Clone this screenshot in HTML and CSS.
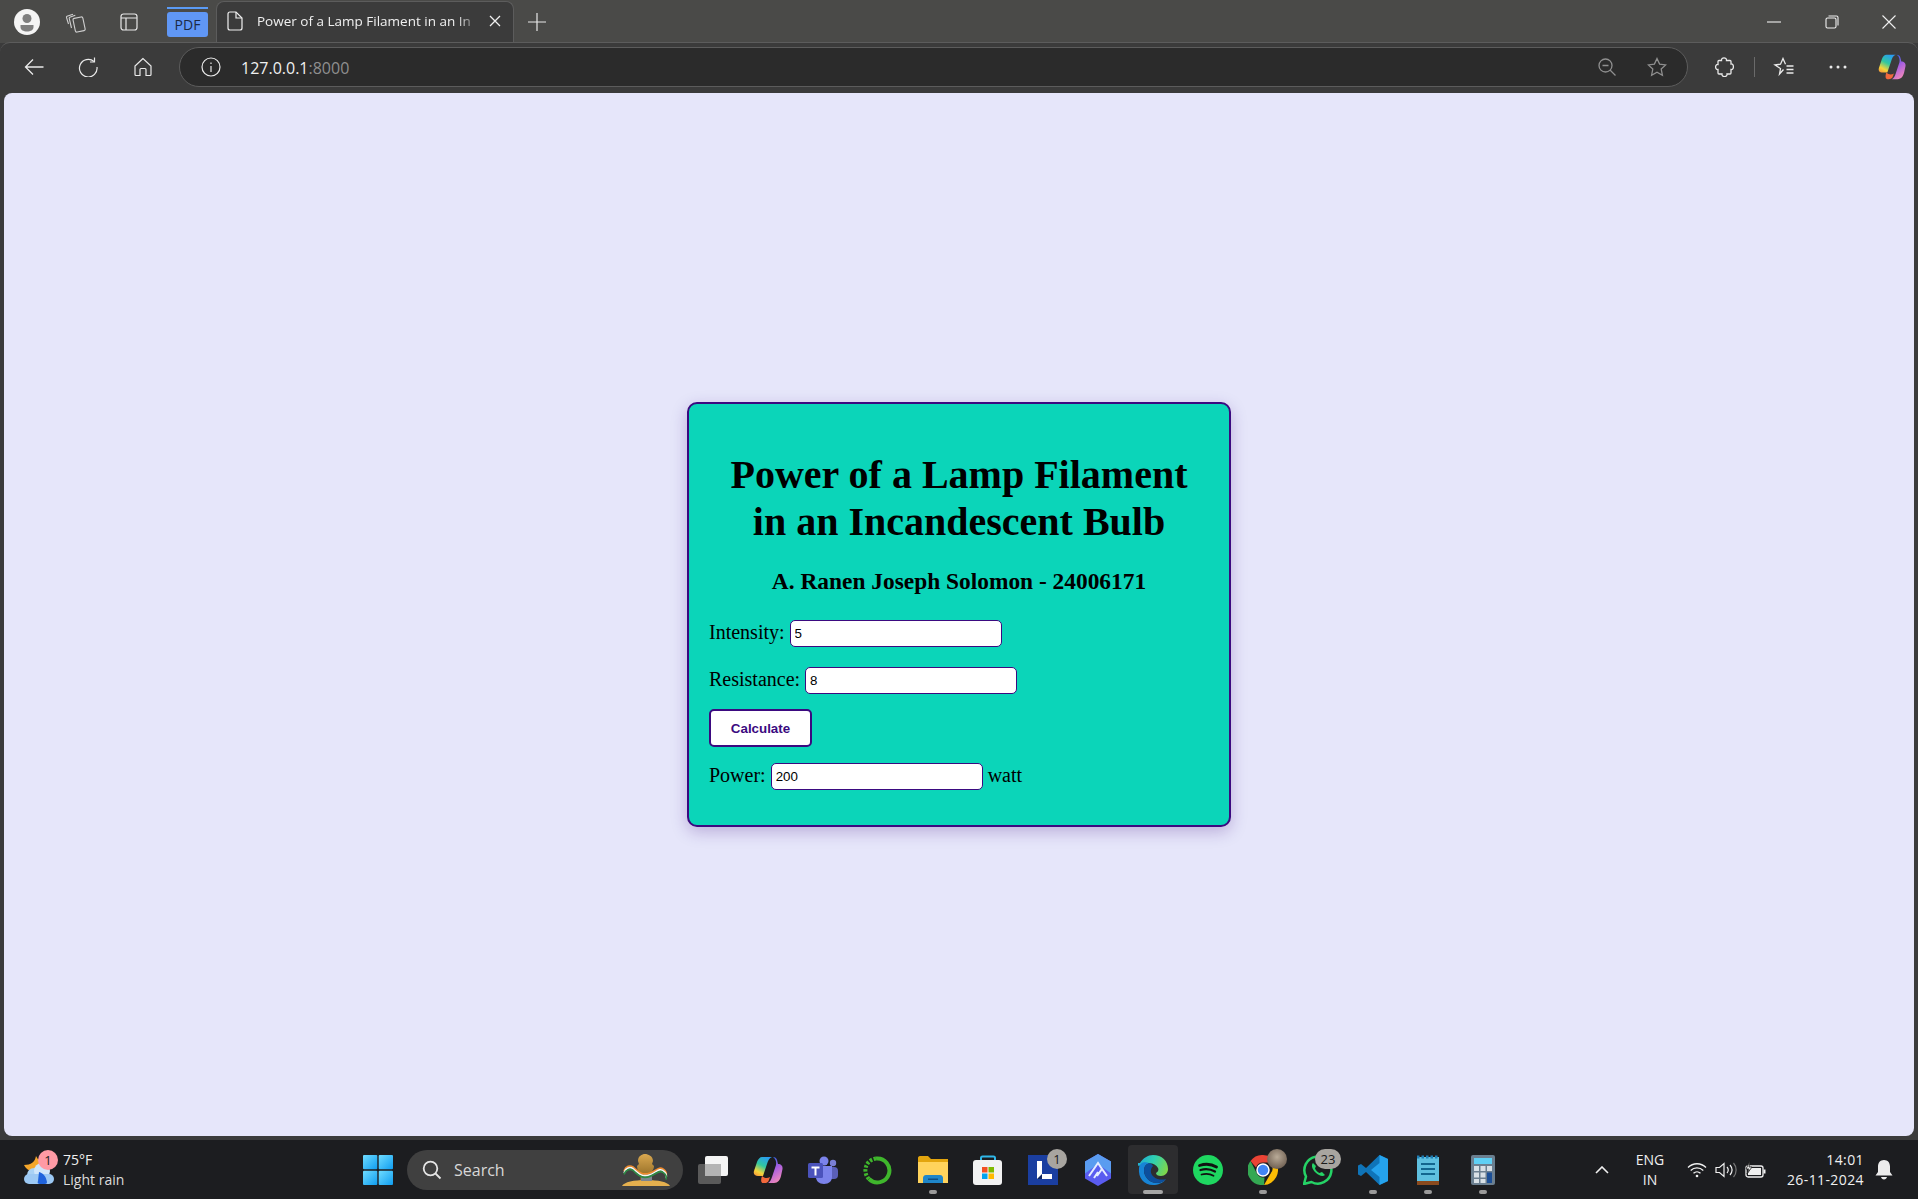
FILE: index.html
```html
<!DOCTYPE html>
<html>

<head>
	<meta charset="utf-8">
	<title>Power of a Lamp Filament in an Incandescent Bulb</title>
	<link rel="stylesheet" href="styles.css">
</head>

<body>
	<svg class="defs" width="0" height="0">
		<defs>
			<linearGradient id="cop-a" x1=".7" y1="0" x2=".2" y2="1">
				<stop offset="0" stop-color="#2a9cf2" />
				<stop offset=".45" stop-color="#30c8a0" />
				<stop offset=".8" stop-color="#f5d53a" />
				<stop offset="1" stop-color="#f5a03a" />
			</linearGradient>
			<linearGradient id="cop-b" x1=".3" y1="0" x2=".7" y2="1">
				<stop offset="0" stop-color="#2b63e8" />
				<stop offset=".45" stop-color="#a85fe0" />
				<stop offset="1" stop-color="#f58bb8" />
			</linearGradient>
			<linearGradient id="win-g" x1="0" y1="0" x2="1" y2="1">
				<stop offset="0" stop-color="#6fdcff" />
				<stop offset="1" stop-color="#0f9df0" />
			</linearGradient>
			<linearGradient id="edge-g" x1="0" y1=".3" x2="1" y2=".6">
				<stop offset="0" stop-color="#1fa8d8" />
				<stop offset=".5" stop-color="#2fd0b0" />
				<stop offset="1" stop-color="#7fd64a" />
			</linearGradient>
			<linearGradient id="gold-g" x1="0" y1="0" x2="0" y2="1">
				<stop offset="0" stop-color="#d9a850" />
				<stop offset="1" stop-color="#8a6420" />
			</linearGradient>
			<symbol id="copilot" viewBox="0 0 30 30">
				<path d="M9 2h10c-3 1-4 4-5 7l-4 12H5c-3 0-5-2-4-5l3-9C5 4 7 2 9 2z" fill="url(#cop-a)" />
				<path d="M20 2c2 0 3.500 1 4 3l1 4c3 0 5 2 4.500 5l-1.500 7c-1 4-3 7-7 7h-6c2-1 3-3 4-6l4-12c.5-3 0-6-3-8z" fill="url(#cop-b)" />
				<path d="M9 21c2 2 5 3 8 1l-1 3c-.8 2.500-2.500 3-4.500 3H10c-2 0-2.500-3-1-7z" fill="#f2683c" />
			</symbol>
		</defs>
	</svg>

	<div class="browser">
		<div class="titlebar">
			<div class="avatar">
				<svg width="26" height="26" viewBox="0 0 26 26">
					<circle cx="13" cy="13" r="13" fill="#f4f4f4" />
					<circle cx="13" cy="9.500" r="4.500" fill="#7e7e7e" />
					<path d="M6.500 16h13v2c0 3-3 4.500-6.500 4.500S6.500 21 6.500 18z" fill="#7e7e7e" />
				</svg>
			</div>
			<div class="tb-btn">
				<svg width="22" height="22" viewBox="0 0 22 22" fill="none" stroke="#cfcfcf" stroke-width="1.100">
					<path d="M3.500 13 1.500 6.500c-.2-.6 0-1 .5-1.200L8 3.200" />
					<path d="M6.500 17 4.200 7.500c-.1-.6 .1-1 .6-1.200l5.500-2" />
					<rect x="9" y="6.500" width="10" height="14" rx="1.500" transform="rotate(-12 14 13)" />
				</svg>
			</div>
			<div class="tb-btn">
				<svg width="18" height="18" viewBox="0 0 18 18" fill="none" stroke="#e8e8e8" stroke-width="1.200">
					<rect x="1" y="1" width="16" height="16" rx="2.500" />
					<path d="M1 5h16M6 5v12" />
				</svg>
			</div>
			<div class="pdf-tab">
				<span class="pdf-line"></span>
				<span class="pdf-box">PDF</span>
			</div>
			<div class="tab">
				<svg width="16" height="20" viewBox="0 0 16 20" fill="none" stroke="#f0f0f0" stroke-width="1.200">
					<path d="M3 1h6l6 6v10c0 1.100-.9 2-2 2H3c-1.100 0-2-.9-2-2V3c0-1.100 .9-2 2-2z" />
					<path d="M9 1v6h6" />
				</svg>
				<span class="tab-title">Power of a Lamp Filament in an In</span>
				<svg width="12" height="12" viewBox="0 0 12 12" stroke="#f0f0f0" stroke-width="1.300">
					<path d="M1 1l10 10M11 1 1 11" />
				</svg>
			</div>
			<div class="new-tab">
				<svg width="18" height="18" viewBox="0 0 18 18" stroke="#e8e8e8" stroke-width="1.200">
					<path d="M9 0v18M0 9h18" />
				</svg>
			</div>
			<div class="win-controls">
				<div class="win-btn">
					<svg width="14" height="14" viewBox="0 0 14 14" stroke="#f0f0f0" stroke-width="1.100">
						<path d="M0 7h14" />
					</svg>
				</div>
				<div class="win-btn">
					<svg width="14" height="14" viewBox="0 0 14 14" fill="none" stroke="#f0f0f0" stroke-width="1.100">
						<rect x="1" y="3" width="10" height="10" rx="1.500" />
						<path d="M3.500 1h8c.9 0 1.500 .6 1.500 1.500v8" />
					</svg>
				</div>
				<div class="win-btn">
					<svg width="14" height="14" viewBox="0 0 14 14" stroke="#f0f0f0" stroke-width="1.100">
						<path d="M.5 .5l13 13M13.500 .5l-13 13" />
					</svg>
				</div>
			</div>
		</div>

		<div class="toolbar">
			<div class="tool-btn">
				<svg width="20" height="18" viewBox="0 0 20 18" fill="none" stroke="#eaeaea" stroke-width="1.300">
					<path d="M19.500 9H1.500M9 1.500 1.500 9 9 16.500" />
				</svg>
			</div>
			<div class="tool-btn">
				<svg width="20" height="20" viewBox="0 0 20 20" fill="none" stroke="#eaeaea" stroke-width="1.200">
					<path d="M16 4.500A8.800 8.800 0 1 0 19 10" />
					<path d="M16.500 .5v4.500H12" />
				</svg>
			</div>
			<div class="tool-btn home">
				<svg width="20" height="20" viewBox="0 0 20 20" fill="none" stroke="#eaeaea" stroke-width="1.200">
					<path d="M10 1.500 2 9v8.500c0 .6 .4 1 1 1h4v-6c0-.6 .4-1 1-1h4c.6 0 1 .4 1 1v6h4c.6 0 1-.4 1-1V9z" />
				</svg>
			</div>
			<div class="address">
				<svg width="20" height="20" viewBox="0 0 20 20" fill="none" stroke="#eaeaea" stroke-width="1.200">
					<circle cx="10" cy="10" r="9" />
					<path d="M10 9v6M10 5.500v1.500" />
				</svg>
				<span class="url">127.0.0.1<span class="url-port">:8000</span></span>
				<svg class="addr-zoom" width="18" height="18" viewBox="0 0 18 18" fill="none" stroke="#8f8f8f" stroke-width="1.300">
					<circle cx="7.500" cy="7.500" r="6.500" />
					<path d="M4.500 7.500h6M12 12l5.500 5.500" />
				</svg>
				<svg class="addr-star" width="20" height="20" viewBox="0 0 20 20" fill="none" stroke="#8f8f8f" stroke-width="1.300">
					<path d="M10 1.500l2.600 5.600 6.100 .8-4.500 4.200 1.200 6.100-5.400-3-5.400 3 1.200-6.100L1.300 7.900l6.100-.8z" />
				</svg>
			</div>
			<div class="tool-btn puzzle">
				<svg width="20" height="20" viewBox="0 0 20 20" fill="none" stroke="#eaeaea" stroke-width="1.300">
					<path d="M7.500 3.500c-.5-3.400 5.500-3.400 5 0h3.500c.6 0 1 .4 1 1V7c3.200-.5 3.200 6 0 5.500V16c0 .6-.4 1-1 1h-3c.5 3.400-5.500 3.400-5 0H5c-.6 0-1-.4-1-1v-3.500C.8 13 .8 7 4 7.500V4.500c0-.6 .4-1 1-1z" />
				</svg>
			</div>
			<span class="tool-sep"></span>
			<div class="tool-btn">
				<svg width="22" height="20" viewBox="0 0 22 20" fill="none" stroke="#eaeaea" stroke-width="1.300">
					<path d="M10.500 12.500 6.500 17l1-5.500L2 8l5.500-.8L10 1.500l2.500 5.700" />
					<path d="M13.500 9h7M13.500 12.500h7M13.500 16h7" />
				</svg>
			</div>
			<div class="tool-btn">
				<svg width="18" height="4" viewBox="0 0 18 4" fill="#eaeaea">
					<circle cx="2" cy="2" r="1.500" />
					<circle cx="9" cy="2" r="1.500" />
					<circle cx="16" cy="2" r="1.500" />
				</svg>
			</div>
			<div class="tool-btn">
				<svg width="28" height="28">
					<use href="#copilot" />
				</svg>
			</div>
		</div>

		<main class="viewport">
			<div class="container">
				<h1 class="title">Power of a Lamp Filament in an Incandescent Bulb</h1>
				<h3 class="author">A. Ranen Joseph Solomon - 24006171</h3>
				<form class="calc-form">
					<div class="form-row">
						<label>Intensity:</label>
						<input class="field" type="text" value="5">
					</div>
					<div class="form-row">
						<label>Resistance:</label>
						<input class="field" type="text" value="8">
					</div>
					<div class="form-row btn-row">
						<button class="calc-btn" type="button">Calculate</button>
					</div>
					<div class="form-row">
						<label>Power:</label>
						<input class="field" type="text" value="200" readonly>
						<span class="unit">watt</span>
					</div>
				</form>
			</div>
		</main>
	</div>

	<div class="taskbar">
		<div class="weather">
			<div class="weather-icon">
				<svg width="32" height="32" viewBox="0 0 32 32">
					<path d="M13 2c-1 6-5 9-12 9 2 4 6 7 12 6 5-1 8-5 7-9-2 0-5-2-7-6z" fill="#f4a62a" />
					<circle cx="11" cy="21" r="7" fill="#a9d2f5" />
					<circle cx="19" cy="17" r="8" fill="#cfe6fb" />
					<rect x="1" y="20" width="30" height="10" rx="5" fill="#9cc9f4" />
					<path d="M16 18c4 1 7 4 8 10 0 1-.5 2-2 2h-5c-2 0-3-1-2-3z" fill="#1f63dc" />
				</svg>
				<span class="weather-badge">1</span>
			</div>
			<div class="weather-text">
				<span>75°F</span>
				<span class="weather-desc">Light rain</span>
			</div>
		</div>

		<div class="task-icons">
			<div class="task-icon">
				<svg width="30" height="30" viewBox="0 0 30 30" fill="url(#win-g)">
					<rect x="0" y="0" width="14.300" height="14.300" rx="1" />
					<rect x="15.700" y="0" width="14.300" height="14.300" rx="1" />
					<rect x="0" y="15.700" width="14.300" height="14.300" rx="1" />
					<rect x="15.700" y="15.700" width="14.300" height="14.300" rx="1" />
				</svg>
			</div>
			<div class="search">
				<svg width="20" height="20" viewBox="0 0 20 20" fill="none" stroke="#e6e6e6" stroke-width="1.800">
					<circle cx="8.500" cy="8.500" r="6.800" />
					<path d="M13.500 13.500 18.500 18.500" />
				</svg>
				<span class="search-text">Search</span>
				<svg class="search-art" width="48" height="34" viewBox="0 0 48 34">
					<path d="M0 33c2-4 12-6 24-6s22 2 24 6z" fill="#e5b04e" />
					<path d="M16 8c0-5 4-7 7-7s8 2 8 7l-1 3 2 2c0 4-3 6-4 8l1 6H18l1-6c-2-2-4-4-4-8l2-2z" fill="url(#gold-g)" />
					<rect x="19" y="22" width="11" height="6" fill="#7d8590" />
					<g fill="none" stroke-width="1.700">
						<path d="M2 18c2-5 6-6 9-4 5 4 8 9 17 6 6-2 9-7 13-4 3 2 4 4 3 7" stroke="#ee8a2c" />
						<path d="M2 19.700c2-5 6-6 9-4 5 4 8 9 17 6 6-2 9-7 13-4 3 2 4 4 3 7" stroke="#f6f6f6" />
						<path d="M2 21.400c2-5 6-6 9-4 5 4 8 9 17 6 6-2 9-7 13-4 3 2 4 4 3 7" stroke="#2e8b45" />
					</g>
				</svg>
			</div>
			<div class="task-icon">
				<svg width="30" height="28" viewBox="0 0 30 28">
					<rect x="0" y="8" width="23" height="20" rx="2" fill="#5a5a5a" />
					<rect x="7" y="0" width="23" height="20" rx="2" fill="#f4f4f4" />
					<rect x="7" y="8" width="16" height="12" fill="#b4b4b4" />
				</svg>
			</div>
			<div class="task-icon">
				<svg width="30" height="30">
					<use href="#copilot" />
				</svg>
			</div>
			<div class="task-icon">
				<svg width="30" height="28" viewBox="0 0 30 28">
					<circle cx="25" cy="7" r="3.200" fill="#7a7fd6" />
					<rect x="20" y="11" width="10" height="12" rx="4" fill="#5a5fb8" />
					<circle cx="16" cy="5" r="4.500" fill="#7b83eb" />
					<path d="M8 10h16v11c0 4-3 7-8 7s-8-3-8-7z" fill="#7b83eb" />
					<rect x="0" y="7" width="15" height="15" rx="1.500" fill="#4b53bc" />
					<path d="M3.500 10.500h8v2h-3v7h-2v-7h-3z" fill="#fff" />
				</svg>
			</div>
			<div class="task-icon">
				<svg width="30" height="30" viewBox="0 0 30 30" fill="none">
					<path d="M13 3.500A12 12 0 1 1 6 24" stroke="#3fb62c" stroke-width="4" />
					<path d="M13 3.500A12 12 0 0 0 6 24" stroke="#3fb62c" stroke-width="4" stroke-dasharray="2.500 1.500" />
				</svg>
			</div>
			<div class="task-icon has-dot">
				<svg width="30" height="28" viewBox="0 0 30 28">
					<path d="M0 2c0-1 .6-2 2-2h8l3 3h17v23H0z" fill="#e3a50e" />
					<rect x="0" y="6" width="30" height="21" fill="#ffd35c" />
					<path d="M5 27v-5c0-1.500 1-3 3-3h14c2 0 3 1.500 3 3v5z" fill="#1f86c9" />
					<rect x="10" y="22.500" width="10" height="1.500" fill="#0c4f86" />
				</svg>
				<span class="run-dot"></span>
			</div>
			<div class="task-icon">
				<svg width="30" height="30" viewBox="0 0 30 30">
					<path d="M8 7V3c0-1 .6-1.500 1.500-1.500h11c.9 0 1.500 .5 1.500 1.500v4" fill="none" stroke="#2fb7e8" stroke-width="2" />
					<rect x="0" y="5" width="29" height="25" rx="3" fill="#f2f2f2" />
					<rect x="9" y="12" width="5.500" height="5.500" fill="#f25022" />
					<rect x="15.500" y="12" width="5.500" height="5.500" fill="#7fba00" />
					<rect x="9" y="18.500" width="5.500" height="5.500" fill="#00a4ef" />
					<rect x="15.500" y="18.500" width="5.500" height="5.500" fill="#ffb900" />
				</svg>
			</div>
			<div class="task-icon">
				<svg width="30" height="30" viewBox="0 0 30 30">
					<rect width="30" height="30" fill="#1a3ea0" />
					<path d="M9 6h5v13h10v5H9z" fill="#fff" />
					<path d="M9 24l5-5v5z" fill="#10255f" />
				</svg>
				<span class="task-badge">1</span>
			</div>
			<div class="task-icon">
				<svg width="30" height="32" viewBox="0 0 30 32">
					<path d="M15 0 28 7.500v17L15 32 2 24.500v-17z" fill="#5a5cf0" />
					<path d="M15 0 28 7.500v12L15 10 2 19.500v-12z" fill="#5a9cf0" />
					<path d="M6 22 15 9l4 6M14 22l5-7 5 7M11 24l4-6" fill="none" stroke="#e4ecff" stroke-width="2" />
				</svg>
			</div>
			<div class="task-icon active">
				<svg width="30" height="30" viewBox="0 0 30 30">
					<path d="M2 8C5 3 10 0 15 0c9 0 15 6 15 14 0 4-3 7-7 7-3 0-5-1-5-3 2-1 3-3 2-5-2-4-8-6-12-4-5 1-8 4-10-1z" fill="url(#edge-g)" />
					<path d="M1 13C2 6 8 7 11 8 6 10 5 15 7 20c2 5 7 8 12 8 4 0 7-2 9-4-3 4-8 6-13 6C6 30 0 23 1 13z" fill="#1784d6" />
					<path d="M11 8c-5 2-6 7-4 12 2 5 7 8 12 8 4 0 7-2 9-4-3 1-9 1-12-2-4-3-4-8-1-11-1-2-3-3-4-3z" fill="#0c4f9e" />
				</svg>
				<span class="run-bar"></span>
			</div>
			<div class="task-icon">
				<svg width="30" height="30" viewBox="0 0 30 30" fill="none" stroke="#111" stroke-linecap="round">
					<circle cx="15" cy="15" r="15" fill="#1ed760" stroke="none" />
					<path d="M6.500 10.500c6-2 12-1.500 17 1.500" stroke-width="2.800" />
					<path d="M7.500 15c5-1.500 10-1 14.500 1.500" stroke-width="2.300" />
					<path d="M8.500 19.500c4-1 8.500-.8 12 1.200" stroke-width="1.800" />
				</svg>
			</div>
			<div class="task-icon has-dot">
				<svg width="30" height="30" viewBox="0 0 30 30">
					<path d="M15 0A15 15 0 0 1 28 7.500H15a7.500 7.500 0 0 0-7 5L2.500 6A15 15 0 0 1 15 0z" fill="#ea4335" />
					<path d="M28 7.500A15 15 0 0 1 16 30l6.500-11.200a7.500 7.500 0 0 0-1-11.300z" fill="#fbbc04" />
					<path d="M2.500 6 9 18.800a7.500 7.500 0 0 0 6 3.700h1.500L16 30A15 15 0 0 1 2.500 6z" fill="#34a853" />
					<circle cx="15" cy="15" r="6" fill="#4285f4" stroke="#fff" stroke-width="1.500" />
				</svg>
				<span class="task-badge photo"></span>
				<span class="run-dot"></span>
			</div>
			<div class="task-icon">
				<svg width="30" height="30" viewBox="0 0 30 30" fill="none">
					<path d="M1 29l2-7.500A13.500 13.500 0 1 1 8.500 27z" stroke="#25d366" stroke-width="2.500" stroke-linejoin="round" />
					<path d="M10 8c-2 2-1 6 2.500 9.500S20 22 22 20l-3-3-2.500 1c-2-1-3.500-2.500-4.500-4.500l1-2.500z" fill="#25d366" />
				</svg>
				<span class="task-badge wide">23</span>
			</div>
			<div class="task-icon has-dot">
				<svg width="30" height="30" viewBox="0 0 30 30">
					<path d="M21.500 0 30 4v22l-8.500 4L8 17l-5 4-3-1.500v-9L3 9l5 4z" fill="#0f74b8" />
					<path d="M21.500 0 30 4v22l-8.500 4zM21.500 8 13 15l8.500 7z" fill="#25a3ed" fill-rule="evenodd" />
				</svg>
				<span class="run-dot"></span>
			</div>
			<div class="task-icon has-dot">
				<svg width="24" height="30" viewBox="0 0 24 30">
					<rect x="1" y="2" width="22" height="26" fill="#5fc0e0" />
					<rect x="1" y="26" width="22" height="4" fill="#8a4a1e" />
					<path d="M1 2h22" stroke="#1f7fb5" stroke-width="3" stroke-dasharray="2.500 2" />
					<path d="M5 9h14M5 14h14M5 19h14" stroke="#13668f" stroke-width="2" />
				</svg>
				<span class="run-dot"></span>
			</div>
			<div class="task-icon has-dot">
				<svg width="24" height="30" viewBox="0 0 24 30">
					<rect width="24" height="30" rx="2" fill="#6b7f90" />
					<rect x="3" y="3" width="18" height="6" fill="#5fd0f5" />
					<g fill="#d8e0e6">
						<rect x="3" y="11" width="5" height="5" />
						<rect x="9.500" y="11" width="5" height="5" />
						<rect x="16" y="11" width="5" height="5" />
						<rect x="3" y="17.500" width="5" height="5" />
						<rect x="9.500" y="17.500" width="5" height="5" />
						<rect x="3" y="24" width="5" height="4" />
						<rect x="9.500" y="24" width="5" height="4" />
					</g>
					<rect x="16" y="17.500" width="5" height="10.500" fill="#1c4f96" />
				</svg>
				<span class="run-dot"></span>
			</div>
		</div>

		<div class="tray">
			<div class="tray-chevron">
				<svg width="14" height="8" viewBox="0 0 14 8" fill="none" stroke="#f0f0f0" stroke-width="1.600">
					<path d="M1 7l6-6 6 6" />
				</svg>
			</div>
			<div class="lang">
				<span>ENG</span>
				<span>IN</span>
			</div>
			<div class="tray-icon">
				<svg width="20" height="16" viewBox="0 0 20 16" fill="none" stroke="#f0f0f0" stroke-width="1.300">
					<path d="M1 5.500c5-5 13-5 18 0M3.700 8.500c3.500-3.500 9-3.500 12.600 0M6.500 11.300c2-2 5-2 7 0" />
					<circle cx="10" cy="14" r="1.300" fill="#f0f0f0" stroke="none" />
				</svg>
			</div>
			<div class="tray-icon">
				<svg width="22" height="18" viewBox="0 0 22 18" fill="none" stroke="#f0f0f0" stroke-width="1.200">
					<path d="M1 6.500h3.500L9 2.500v13l-4.500-4H1z" />
					<path d="M12 6c1.500 1.800 1.500 4.200 0 6M15 4c2.500 3 2.500 7 0 10" />
					<path d="M18.500 2c3.500 4 3.500 10 0 14" stroke="#777" />
				</svg>
			</div>
			<div class="tray-icon">
				<svg width="22" height="18" viewBox="0 0 22 18">
					<rect x="2" y="5" width="17" height="11" rx="2" fill="none" stroke="#f0f0f0" stroke-width="1.300" />
					<rect x="4" y="7" width="13" height="7" fill="#f0f0f0" />
					<rect x="19.500" y="8.500" width="2" height="4" fill="#f0f0f0" />
					<path d="M6 0 2 8h3l-2 5 5-7H5z" fill="#f0f0f0" stroke="#1c1c1c" stroke-width=".8" />
				</svg>
			</div>
			<div class="clock">
				<span>14:01</span>
				<span>26-11-2024</span>
			</div>
			<div class="bell">
				<svg width="18" height="20" viewBox="0 0 18 20" fill="#ececec">
					<path d="M9 0c-3.800 0-6 2.800-6 6.500V12l-2.500 3.500h17L15 12V6.500C15 2.800 12.800 0 9 0z" />
					<path d="M6 17h6c-.4 1.500-1.500 2.500-3 2.500S6.400 18.500 6 17z" />
				</svg>
			</div>
		</div>
	</div>
</body>

</html>
```

FILE: styles.css
```css
* {
	box-sizing: border-box;
}

html,
body {
	margin: 0;
	height: 1199px;
	overflow: hidden;
}

body {
	display: flex;
	flex-direction: column;
	background: #1c1d20;
	color: #f0f0f0;
	font-family: "Open Sans", "Noto Sans", sans-serif;
}

.defs {
	position: absolute;
}

.browser {
	flex: 1;
	display: flex;
	flex-direction: column;
	background: #3b3b3b;
	padding-bottom: 4px;
	min-height: 0;
}

/* title bar */
.titlebar {
	display: flex;
	align-items: center;
	height: 43px;
	background: #4a4a48;
	padding-left: 14px;
}

.avatar {
	display: flex;
	width: 26px;
}

.tb-btn {
	display: flex;
	justify-content: center;
	align-items: center;
	width: 44px;
	height: 40px;
	margin-left: 9px;
}

.avatar+.tb-btn {
	margin-left: 14px;
}

.pdf-tab {
	position: relative;
	width: 41px;
	height: 34px;
	margin-left: 16px;
	margin-top: 4px;
}

.pdf-line {
	position: absolute;
	top: 0;
	left: 0;
	right: 0;
	height: 2px;
	background: #5b9bf5;
}

.pdf-box {
	position: absolute;
	top: 5px;
	left: 0;
	right: 0;
	height: 25px;
	border-radius: 3px;
	background: #6097f5;
	color: #1b2a44;
	font-size: 14px;
	line-height: 25px;
	text-align: center;
}

.tab {
	display: flex;
	align-items: center;
	align-self: flex-end;
	width: 298px;
	height: 42px;
	margin-left: 8px;
	padding: 0 12px 3px 10px;
	background: #3b3b3b;
	border: 1px solid #5c5c5c;
	border-bottom: none;
	border-radius: 8px 8px 0 0;
}

.tab-title {
	flex: 1;
	margin: 0 11px 0 14px;
	white-space: nowrap;
	font-size: 13.500px;
	-webkit-mask-image: linear-gradient(to right, #000 90%, rgba(0, 0, 0, 0.15));
	mask-image: linear-gradient(to right, #000 90%, rgba(0, 0, 0, 0.15));
}

.new-tab {
	display: flex;
	justify-content: center;
	width: 46px;
}

.win-controls {
	display: flex;
	margin-left: auto;
}

.win-btn {
	display: flex;
	justify-content: center;
	width: 57.500px;
}

/* toolbar */
.toolbar {
	display: flex;
	align-items: center;
	height: 51px;
	padding: 0 3px 2px 11px;
	border-top: 1px solid #5c5c5c;
	border-radius: 10px 10px 0 0;
	margin-top: -1px;
}

.tool-btn {
	display: flex;
	justify-content: center;
	align-items: center;
	width: 46px;
	flex-shrink: 0;
}

.tool-btn+.tool-btn {
	margin-left: 8px;
}

.tool-btn.home {
	margin-left: 9px;
}

.address {
	flex: 1;
	display: flex;
	align-items: center;
	height: 40px;
	margin-left: 13px;
	padding: 0 20px 0 21px;
	background: #2b2b2b;
	border: 1px solid #5c5c5c;
	border-radius: 20px;
}

.url {
	margin: 1px 0 0 20px;
	font-size: 16px;
}

.url-port {
	color: #8f8f8f;
}

.addr-zoom {
	margin-left: auto;
}

.addr-star {
	margin-left: 31px;
}

.puzzle {
	margin-left: 13px;
}

.tool-sep {
	width: 1px;
	height: 20px;
	margin: 0 6px 0 7px;
	background: #6a6a6a;
}

/* page */
.viewport {
	flex: 1;
	display: flex;
	justify-content: center;
	align-items: center;
	margin: 0 4px;
	background: #e6e6fa;
	border-radius: 8px;
	color: #000;
	font-family: "Liberation Serif", "Times New Roman", serif;
	font-size: 20px;
}

.container {
	width: 544px;
	height: 425px;
	padding: 0 20px;
	background: #0bd5b9;
	border: 2px solid #3b0a80;
	border-radius: 10px;
	box-shadow: 0 5px 16px rgba(59, 10, 128, 0.25);
}

.title {
	margin: 47px 0 0;
	font-size: 40px;
	line-height: 47px;
	text-align: center;
}

.author {
	margin: 23px 0 0;
	font-size: 23.400px;
	line-height: 27px;
	text-align: center;
}

.calc-form {
	margin-top: 25px;
}

.form-row {
	display: flex;
	align-items: center;
	gap: 5px;
	margin-bottom: 20px;
}

.form-row label,
.unit {
	padding-bottom: 2px;
}

.btn-row {
	margin-top: -5px;
	margin-bottom: 16px;
}

.field {
	width: 212px;
	height: 27px;
	padding: 0 4px;
	background: #fff;
	border: 1px solid #3b0a80;
	border-radius: 5px;
	color: #000;
	font-family: "Liberation Sans", Arial, sans-serif;
	font-size: 13.333px;
	outline: none;
}

.calc-btn {
	width: 103px;
	height: 38px;
	background: #fff;
	border: 2px solid #3b0a80;
	border-radius: 5px;
	color: #3b0a80;
	font-family: "Liberation Sans", Arial, sans-serif;
	font-size: 13.333px;
	font-weight: bold;
}

/* taskbar */
.taskbar {
	display: flex;
	align-items: center;
	flex-shrink: 0;
	height: 59px;
	background: #1c1d20;
}

.weather {
	display: flex;
	align-items: center;
	width: 350px;
	padding-left: 23px;
	flex-shrink: 0;
}

.weather-icon {
	position: relative;
	display: flex;
	width: 40px;
}

.weather-badge {
	position: absolute;
	top: -4px;
	left: 15px;
	width: 20px;
	height: 20px;
	border-radius: 50%;
	background: #ff9aa5;
	color: #222;
	font-size: 13px;
	line-height: 20px;
	text-align: center;
}

.weather-text {
	display: flex;
	flex-direction: column;
	font-size: 14px;
	line-height: 20px;
}

.weather-desc {
	color: #dcdcdc;
}

.task-icons {
	display: flex;
	align-items: center;
}

.task-icon {
	position: relative;
	display: flex;
	justify-content: center;
	align-items: center;
	width: 55px;
	height: 49px;
}

.task-icon.active {
	width: 50px;
	margin: 0 2.500px;
	background: #2d2d2f;
	border-radius: 4px;
}

.run-dot {
	position: absolute;
	bottom: 0;
	left: 23.500px;
	width: 8px;
	height: 4px;
	border-radius: 2px;
	background: #9a9a9a;
}

.run-bar {
	position: absolute;
	bottom: 0;
	left: 15px;
	width: 20px;
	height: 4px;
	border-radius: 2px;
	background: #a5a5a5;
}

.task-badge {
	position: absolute;
	top: 4px;
	left: 32px;
	width: 20px;
	height: 20px;
	border-radius: 50%;
	background: #a8a5a0;
	color: #1c1c1c;
	font-size: 13px;
	line-height: 20px;
	text-align: center;
}

.task-badge.photo {
	background: radial-gradient(circle at 50% 40%, #b9ab98, #5a4a3e);
}

.task-badge.wide {
	left: 25px;
	width: 26px;
	border-radius: 10px;
}

.search {
	display: flex;
	align-items: center;
	width: 276px;
	height: 40px;
	margin: 0 2px;
	padding: 0 13px 0 15px;
	background: #404040;
	border-radius: 20px;
}

.search-text {
	margin-left: 12px;
	color: #d8d8d8;
	font-size: 16px;
}

.search-art {
	margin-left: auto;
}

.tray {
	display: flex;
	align-items: center;
	width: 333px;
	margin-left: auto;
	padding-right: 22px;
	flex-shrink: 0;
}

.tray-chevron {
	display: flex;
	justify-content: center;
	width: 34px;
}

.lang {
	display: flex;
	flex-direction: column;
	align-items: center;
	width: 50px;
	margin: 0 8px 0 6px;
	font-size: 14px;
	line-height: 20px;
}

.tray-icon {
	display: flex;
	justify-content: center;
	width: 28px;
	margin-right: 1px;
}

.clock {
	flex: 1;
	display: flex;
	flex-direction: column;
	align-items: flex-end;
	font-size: 14px;
	line-height: 20px;
	letter-spacing: 0.4px;
}

.bell {
	display: flex;
	justify-content: center;
	width: 24px;
	margin-left: 8px;
}
```
